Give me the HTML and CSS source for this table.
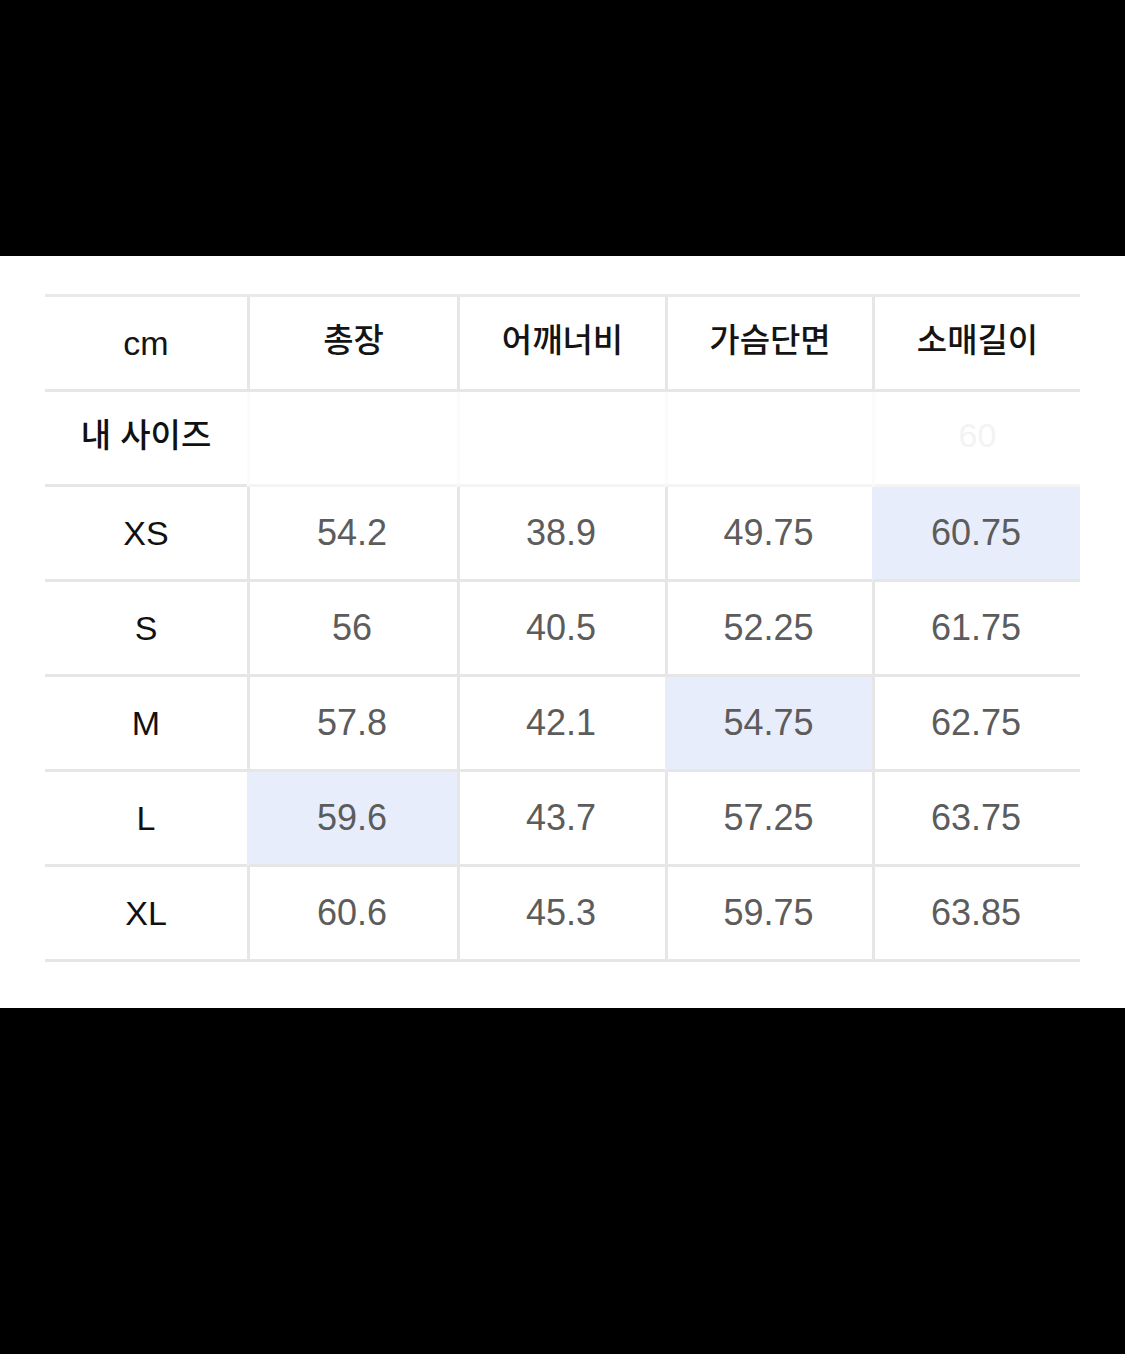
FILE: index.html
```html
<!DOCTYPE html>
<html lang="ko">
<head>
<meta charset="utf-8">
<title>사이즈표</title>
<link rel="stylesheet" href="styles.css">
</head>
<body>
<div class="band-top"></div>
<section class="sheet">
  <div class="grid">
    <div class="cell head first">cm</div>
    <div class="cell head">총장</div>
    <div class="cell head">어깨너비</div>
    <div class="cell head">가슴단면</div>
    <div class="cell head">소매길이</div>

    <div class="cell label first mine">내 사이즈</div>
    <div class="cell mine blank"></div>
    <div class="cell mine blank"></div>
    <div class="cell mine blank"></div>
    <div class="cell mine blank ghost">60</div>

    <div class="cell label first">XS</div>
    <div class="cell num">54.2</div>
    <div class="cell num">38.9</div>
    <div class="cell num">49.75</div>
    <div class="cell num hl">60.75</div>

    <div class="cell label first">S</div>
    <div class="cell num">56</div>
    <div class="cell num">40.5</div>
    <div class="cell num">52.25</div>
    <div class="cell num">61.75</div>

    <div class="cell label first">M</div>
    <div class="cell num">57.8</div>
    <div class="cell num">42.1</div>
    <div class="cell num hl">54.75</div>
    <div class="cell num">62.75</div>

    <div class="cell label first">L</div>
    <div class="cell num hl">59.6</div>
    <div class="cell num">43.7</div>
    <div class="cell num">57.25</div>
    <div class="cell num">63.75</div>

    <div class="cell label first">XL</div>
    <div class="cell num">60.6</div>
    <div class="cell num">45.3</div>
    <div class="cell num">59.75</div>
    <div class="cell num">63.85</div>
  </div>
</section>
<div class="band-bottom"></div>
</body>
</html>
```

FILE: styles.css
```css
html, body {
  margin: 0;
  padding: 0;
  background: #000;
}
body {
  width: 1125px;
  height: 1354px;
  font-family: "Liberation Sans", "Noto Sans CJK KR", Arial, sans-serif;
}
.band-top {
  height: 256px;
  background: #000;
}
.band-bottom {
  height: 346px;
  background: #000;
}
.sheet {
  background: #fff;
  padding: 38px 45px 46px 45px;
  height: 752px;
  box-sizing: border-box;
}
.grid {
  display: grid;
  grid-template-columns: 202px 210px 208px 207px 208px;
  grid-auto-rows: 95px;
  border-top: 3px solid #e9e9e9;
  width: 1035px;
}
.cell {
  display: flex;
  align-items: center;
  justify-content: center;
  border-bottom: 3px solid #e6e6e6;
  border-left: 3px solid #e6e6e6;
  box-sizing: border-box;
  background: #fff;
}
.cell.first {
  border-left: none;
}
.head {
  font-family: "Noto Sans CJK KR", "Liberation Sans", sans-serif;
  font-size: 33px;
  font-weight: 500;
  color: #141414;
  padding-bottom: 10px;
}
.head.first {
  font-family: "Liberation Sans", "Noto Sans CJK KR", sans-serif;
  font-size: 34px;
  font-weight: 400;
  padding-bottom: 0;
}
.label {
  font-size: 34px;
  color: #111;
}
.label.mine {
  font-family: "Noto Sans CJK KR", sans-serif;
  font-size: 33px;
  font-weight: 500;
  padding-bottom: 10px;
}
.mine.blank {
  border-left-color: #fbfbfb;
  border-bottom-color: #f4f4f4;
}
.ghost {
  font-size: 34px;
  color: #f3f3f3;
  padding-bottom: 6px;
}
.num {
  font-size: 36px;
  color: #5c5c5c;
  padding-right: 3px;
}
.hl {
  background: #e7edfb;
  border-left-color: #e7edfb;
}
```
